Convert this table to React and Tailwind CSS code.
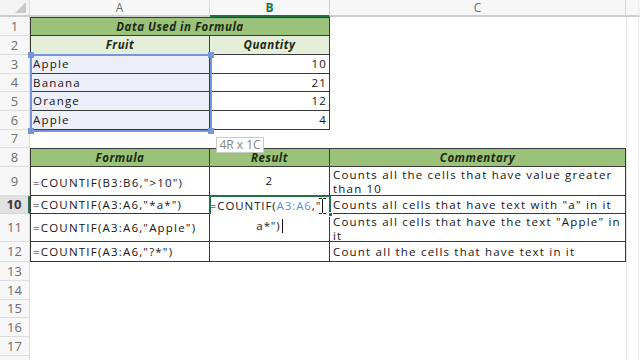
const cell = 'flex items-center text-[11.5px] tracking-[1.2px] text-[#151515] whitespace-nowrap overflow-hidden';
const wrapCell = 'pl-[3px] pt-[1px] text-[11.5px] leading-[14px] tracking-[1.2px] text-[#151515] whitespace-nowrap';
const line = 'border-[#3a3a3a]';
const headGreen = 'flex items-center justify-center bg-[#9bc27b] text-[11.5px] font-bold italic tracking-[0.5px] text-[#1c2a12]';
const headLight = 'flex items-center justify-center bg-[#e5eedb] text-[11.5px] font-bold italic tracking-[0.5px] text-[#1c2a12]';
const colHead = 'flex items-center justify-center border-b-2 border-r bg-[#f7f7f7] text-[12px] leading-[15px]';

function RowHead({ n, active }) {
  return (
    <div
      className={
        active
          ? 'flex items-center justify-center border-b border-r-2 border-b-[#d6d6d6] border-r-[#217346] bg-[#e1e1e1] text-[13px] leading-none font-bold text-[#3b3b3b]'
          : 'flex items-center justify-center border-b border-r border-[#dedede] bg-[#f7f7f7] text-[13px] leading-none text-[#6e6e6e]'
      }
    >
      {n}
    </div>
  );
}

function Empty({ span }) {
  return <div className={span === 4 ? 'col-span-4' : span === 3 ? 'col-span-3' : span === 2 ? 'col-span-2' : ''} />;
}

export default function App() {
  return (
    <div className="h-[360px] w-[640px] overflow-hidden bg-white font-['Open_Sans','DejaVu_Sans',sans-serif]">
      <div className="relative grid grid-cols-[30px_180px_120px_296px_1fr] grid-rows-[17px_19px_19px_19px_18px_19px_19px_18px_19px_29px_18px_28px_20px_19px_19px_18px_19px_19px_19px]">
        {/* column headers */}
        <div className="relative border-b-2 border-r border-b-[#cdcdcd] border-r-[#dedede] bg-[#f4f4f4]">
          <svg className="absolute bottom-[2px] right-[3px]" width="11" height="11" viewBox="0 0 11 11">
            <polygon points="11,0 11,11 0,11" fill="#c9c9c9" />
          </svg>
        </div>
        <div className={`${colHead} border-b-[#cdcdcd] border-r-[#dedede] text-[#6e6e6e]`}>A</div>
        <div className={`${colHead} border-b-[#217346] border-r-[#cfcfcf] bg-[#e1e1e1] font-bold text-[#217346]`}>B</div>
        <div className={`${colHead} border-b-[#cdcdcd] border-r-[#d6d6d6] text-[#6e6e6e]`}>C</div>
        <div className="border-b-2 border-b-[#cdcdcd] bg-[#f7f7f7]" />

        {/* row 1 */}
        <RowHead n={1} />
        <div className={`col-span-2 border ${line} ${headGreen}`}>Data Used in Formula</div>
        <Empty span={2} />

        {/* row 2 */}
        <RowHead n={2} />
        <div className={`border-b border-l border-r ${line} ${headLight}`}>Fruit</div>
        <div className={`border-b border-r ${line} ${headLight}`}>Quantity</div>
        <Empty span={2} />

        {[
          ['Apple', 10],
          ['Banana', 21],
          ['Orange', 12],
          ['Apple', 4],
        ].map(([fruit, qty], i) => (
          <div key={i} className="contents">
            <RowHead n={i + 3} />
            <div className={`${cell} border-b border-l border-r ${line} bg-[#eceef8] pl-[2px]`}>{fruit}</div>
            <div className={`${cell} justify-end border-b border-r ${line} pr-[2px]`}>{qty}</div>
            <Empty span={2} />
          </div>
        ))}

        {/* row 7 */}
        <RowHead n={7} />
        <Empty span={4} />

        {/* row 8 */}
        <RowHead n={8} />
        <div className={`border ${line} ${headGreen}`}>Formula</div>
        <div className={`border-b border-r border-t ${line} ${headGreen}`}>Result</div>
        <div className={`border-b border-r border-t ${line} ${headGreen}`}>Commentary</div>
        <div />

        {/* row 9 */}
        <RowHead n={9} />
        <div className={`${cell} border-b border-l border-r ${line} pl-[2px] pt-[3px]`}>{'=COUNTIF(B3:B6,">10")'}</div>
        <div className={`${cell} justify-center border-b border-r ${line}`}>2</div>
        <div className={`border-b border-r ${line} ${wrapCell}`}>
          Counts all the cells that have value greater
          <br />
          than 10
        </div>
        <div />

        {/* row 10 */}
        <RowHead n={10} active />
        <div className={`${cell} border-b border-l border-r ${line} pl-[2px]`}>{'=COUNTIF(A3:A6,"*a*")'}</div>
        <div className={`row-span-2 flex flex-col items-center border-b border-r ${line} bg-white text-[11.5px] leading-[20px] tracking-[0.9px] text-[#151515] whitespace-nowrap`}>
          <div className="pr-[8px]">
            =COUNTIF(<span className="text-[#5b8bd6]">A3:A6</span>,"
          </div>
          <div className="flex items-center">
            {'a*")'}
            <span className="ml-[1px] inline-block h-[14px] w-[1px] bg-[#111]" />
          </div>
        </div>
        <div className={`${cell} border-b border-r ${line} pl-[3px]`}>{'Counts all cells that have text with "a" in it'}</div>
        <div />

        {/* row 11 */}
        <RowHead n={11} />
        <div className={`${cell} border-b border-l border-r ${line} pl-[2px]`}>{'=COUNTIF(A3:A6,"Apple")'}</div>
        <div className={`border-b border-r ${line} ${wrapCell}`}>
          {'Counts all cells that have the text "Apple" in'}
          <br />
          it
        </div>
        <div />

        {/* row 12 */}
        <RowHead n={12} />
        <div className={`${cell} border-b border-l border-r ${line} pl-[2px]`}>{'=COUNTIF(A3:A6,"?*")'}</div>
        <div className={`border-b border-r ${line}`} />
        <div className={`${cell} border-b border-r ${line} pl-[3px]`}>Count all the cells that have text in it</div>
        <div />

        {[13, 14, 15, 16, 17, ''].map((n, i) => (
          <div key={i} className="contents">
            <RowHead n={n} />
            <Empty span={4} />
          </div>
        ))}

        {/* right edge strip */}
        <div className="pointer-events-none absolute bottom-0 left-[626px] top-[17px] w-[1px] bg-[#e2e2e2]" />
        <div className="pointer-events-none absolute bottom-0 left-[638px] top-0 w-[1px] bg-[#ececec]" />

        {/* selected range A3:A6 */}
        <div className="pointer-events-none absolute left-[30px] top-[54px] h-[78px] w-[182px] border-2 border-[#7597d9]">
          <span className="absolute left-[-4px] top-[-4px] h-[6px] w-[6px] bg-[#7597d9]" />
          <span className="absolute right-[-4px] top-[-4px] h-[6px] w-[6px] bg-[#7597d9]" />
          <span className="absolute bottom-[-4px] left-[-4px] h-[6px] w-[6px] bg-[#7597d9]" />
          <span className="absolute bottom-[-4px] right-[-4px] h-[6px] w-[6px] bg-[#7597d9]" />
        </div>

        {/* range size tip */}
        <div className="absolute left-[216px] top-[137px] flex h-[16px] w-[48px] items-center justify-center border border-[#c8c8c8] bg-white text-[12px] text-[#858585]">
          4R x 1C
        </div>

        {/* active cell B10 */}
        <div className="pointer-events-none absolute left-[209px] top-[195px] h-[19px] w-[122px] border-2 border-b-0 border-[#217346]" />
        <div className="absolute left-[328px] top-[212px] h-[5px] w-[5px] border border-white bg-[#217346]" />

        {/* mouse I-beam */}
        <svg className="absolute left-[317px] top-[197px]" width="11" height="18" viewBox="0 0 11 18">
          <path d="M2 1.5h2.5l1 1 1-1H9M5.5 2.5v13M2 16.5h2.5l1-1 1 1H9" fill="none" stroke="#fff" strokeWidth="3" />
          <path d="M2 1.5h2.5l1 1 1-1H9M5.5 2.5v13M2 16.5h2.5l1-1 1 1H9" fill="none" stroke="#111" strokeWidth="1" />
        </svg>
      </div>
    </div>
  );
}
